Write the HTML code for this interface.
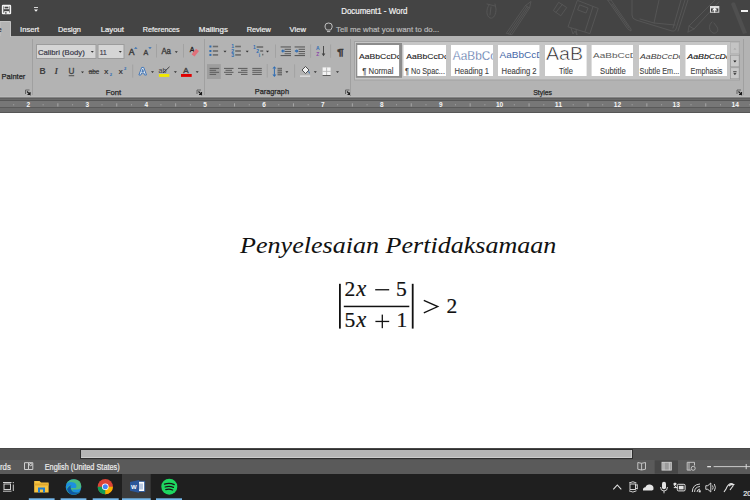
<!DOCTYPE html>
<html><head><meta charset="utf-8">
<style>
*{margin:0;padding:0}
html,body{width:750px;height:500px;overflow:hidden;background:#fff}
svg{display:block}
svg{font-family:"Liberation Sans",sans-serif}
</style></head><body>
<svg width="750" height="500" viewBox="0 0 750 500">

<rect x="0" y="0" width="750" height="36" fill="#444444"/>
<rect x="0" y="36" width="750" height="60" fill="#b3b3b3"/>
<rect x="0" y="96" width="750" height="1" fill="#b9b9b9"/>
<rect x="0" y="97" width="750" height="1" fill="#858585"/>
<rect x="0" y="98" width="750" height="1" fill="#5f5f5f"/>
<rect x="0" y="99" width="750" height="1" fill="#6a6a6a"/>
<rect x="0" y="100" width="750" height="1" fill="#575757"/>
<rect x="0" y="101" width="750" height="6" fill="#777777"/>
<rect x="0" y="107" width="750" height="1" fill="#5a5a5a"/>
<rect x="0" y="108" width="750" height="4" fill="#6c6c6c"/>
<rect x="0" y="112" width="750" height="1" fill="#565656"/>
<rect x="0" y="113" width="750" height="335" fill="#ffffff"/>
<rect x="0" y="448" width="750" height="1" fill="#484848"/>
<rect x="0" y="449" width="750" height="11" fill="#525252"/>
<rect x="80" y="449" width="553" height="10" fill="#2e2e2e"/>
<rect x="81" y="450" width="551" height="8" fill="#cccccc"/>
<rect x="81" y="450" width="550" height="7" fill="#b5b5b5"/>
<rect x="0" y="460" width="750" height="14" fill="#5a5a5a"/>
<rect x="0" y="474" width="750" height="26" fill="#1f1f1f"/>
<g fill="none" stroke="#575757" stroke-width="0.9" stroke-linecap="round" stroke-linejoin="round">
<path d="M489,5 C486,9 486,16 490,18 C494,19 496,14 496,9 L495,4 M491,7 L490,15 M487,4 L495,6"/>
<path d="M506.5,33 L525.5,5.5 L531,1.5 L529.5,8 L512,34.5 Z M508.3,33.6 L527,6.5 M510.2,34 L528.3,7.3 M525.5,5.5 L529.5,8"/>
<path d="M559,2.5 L566.7,7.5 L560.8,15.8 L553.7,10.8 Z M556,12.3 L562.5,4.3"/>
<path d="M577.7,0.5 L598.2,8.4 L589.9,33.6 L568.4,27 Z M593,6.5 L585,31.5 M580,5 L588,8 L586,13 L578,10 Z M571,28 L573,34 L575,31 L577,35 L576,29"/>
<path d="M608,0 L611,0 L631,29 L631,31 L628,29 Z M612,4 L629,28"/>
<path d="M632,0 L632,15 Q632,19 636,20 L672,31 Q675,32 676,29 L685,0 M659,0 L654,23 L675,25 M654,23 L640,19 M681,0 L673,28 M688,0 L678,31"/>
<path d="M688,32 L689,26 L715,0 M688,32 L694,29 L719,2 M689,26 L694,29"/>
<path d="M712,22 C708,25 709,31 713,33 C717,34 719,30 717,27 L714,23"/>
</g>
<path d="M731,4 Q733,1 735,3 L747,33 L743,34 Z" fill="#4f4f4f"/>
<rect x="2.6" y="5.6" width="7.8" height="8" rx="0.4" fill="none" stroke="#f4f4f4" stroke-width="1.5"/>
<rect x="4.2" y="6.2" width="4.6" height="2.6" fill="none" stroke="#f4f4f4" stroke-width="0.8"/>
<rect x="4.2" y="11.2" width="4.8" height="2.6" fill="#f4f4f4"/>
<rect x="5.2" y="12" width="1.3" height="1.8" fill="#555"/>
<rect x="34" y="7" width="4" height="1" fill="#d8d8d8"/>
<path d="M34,9.5 L38,9.5 L36,11.8 Z" fill="#f4f4f4"/>
<text x="341.2" y="13.7" font-size="8.3" fill="#f2f2f2" stroke="#f2f2f2" stroke-width="0.2" textLength="66.3" lengthAdjust="spacingAndGlyphs" >Document1 - Word</text>
<rect x="710" y="6" width="9.3" height="6.7" fill="#dcdcdc"/>
<rect x="711" y="8.4" width="7.3" height="3.3" fill="#3c3c3c"/>
<path d="M711.9,10.4 L714.65,7.6 L717.4,10.4 Z" fill="#f4f4f4"/>
<rect x="714.1" y="10" width="1.1" height="2.7" fill="#f4f4f4"/>
<rect x="741" y="10" width="7" height="2" fill="#f0f0f0"/>
<path d="M0,37 L0,21.5 L10.5,21.5 L10.5,37" fill="#b3b3b3" stroke="#c4c4c4" stroke-width="1"/>
<rect x="0" y="36" width="10" height="2" fill="#b3b3b3"/>
<text x="-2.8" y="32" font-size="8" fill="#2a2a2a" stroke="#2a2a2a" stroke-width="0.2" >e</text>
<text x="20.1" y="32" font-size="8" fill="#f0f0f0" stroke="#f0f0f0" stroke-width="0.2" textLength="19" lengthAdjust="spacingAndGlyphs" >Insert</text>
<text x="58" y="32" font-size="8" fill="#f0f0f0" stroke="#f0f0f0" stroke-width="0.2" textLength="22.9" lengthAdjust="spacingAndGlyphs" >Design</text>
<text x="100.7" y="32" font-size="8" fill="#f0f0f0" stroke="#f0f0f0" stroke-width="0.2" textLength="23.2" lengthAdjust="spacingAndGlyphs" >Layout</text>
<text x="142.8" y="32" font-size="8" fill="#f0f0f0" stroke="#f0f0f0" stroke-width="0.2" textLength="36.8" lengthAdjust="spacingAndGlyphs" >References</text>
<text x="198.8" y="32" font-size="8" fill="#f0f0f0" stroke="#f0f0f0" stroke-width="0.2" textLength="29.1" lengthAdjust="spacingAndGlyphs" >Mailings</text>
<text x="246.7" y="32" font-size="8" fill="#f0f0f0" stroke="#f0f0f0" stroke-width="0.2" textLength="24.2" lengthAdjust="spacingAndGlyphs" >Review</text>
<text x="289.6" y="32" font-size="8" fill="#f0f0f0" stroke="#f0f0f0" stroke-width="0.2" textLength="16.3" lengthAdjust="spacingAndGlyphs" >View</text>
<text x="336" y="32" font-size="8" fill="#b9b9b9" stroke="#b9b9b9" stroke-width="0.2" textLength="103.2" lengthAdjust="spacingAndGlyphs" >Tell me what you want to do...</text>
<g fill="none" stroke="#d0d0d0" stroke-width="0.9"><path d="M326.5,30 Q324.8,27.5 325,26 Q325,23 328.6,23 Q332.2,23 332.2,26 Q332.4,27.5 330.7,30 Z"/><path d="M327,31.6 L330.2,31.6"/></g>
<text x="1.6" y="79.4" font-size="8" fill="#262626" stroke="#262626" stroke-width="0.25" textLength="23.7" lengthAdjust="spacingAndGlyphs" >Painter</text>
<path d="M25.5,94 L25.5,90 L29.5,90" fill="none" stroke="#5a5a5a" stroke-width="0.9"/>
<path d="M27.0,91.5 L30.0,94.5 L30.0,92 M30.0,94.5 L27.5,94.5" fill="none" stroke="#1a1a1a" stroke-width="1.1"/>
<path d="M197,94 L197,90 L201,90" fill="none" stroke="#5a5a5a" stroke-width="0.9"/>
<path d="M198.5,91.5 L201.5,94.5 L201.5,92 M201.5,94.5 L199,94.5" fill="none" stroke="#1a1a1a" stroke-width="1.1"/>
<path d="M345.5,94 L345.5,90 L349.5,90" fill="none" stroke="#5a5a5a" stroke-width="0.9"/>
<path d="M347.0,91.5 L350.0,94.5 L350.0,92 M350.0,94.5 L347.5,94.5" fill="none" stroke="#1a1a1a" stroke-width="1.1"/>
<path d="M737,94 L737,90 L741,90" fill="none" stroke="#5a5a5a" stroke-width="0.9"/>
<path d="M738.5,91.5 L741.5,94.5 L741.5,92 M741.5,94.5 L739,94.5" fill="none" stroke="#1a1a1a" stroke-width="1.1"/>
<rect x="32.0" y="39" width="1" height="56" fill="#a0a0a0"/>
<rect x="204.0" y="39" width="1" height="56" fill="#a0a0a0"/>
<rect x="350.0" y="39" width="1" height="56" fill="#a0a0a0"/>
<rect x="743.0" y="39" width="1" height="56" fill="#a0a0a0"/>
<rect x="156.0" y="44" width="1" height="13.5" fill="#a2a2a2"/>
<rect x="183.0" y="44" width="1" height="13.5" fill="#a2a2a2"/>
<rect x="132.2" y="64.5" width="1" height="13.200000000000003" fill="#a2a2a2"/>
<rect x="275.0" y="44.5" width="1" height="13.299999999999997" fill="#a2a2a2"/>
<rect x="310.1" y="44.5" width="1" height="13.299999999999997" fill="#a2a2a2"/>
<rect x="330.1" y="44.5" width="1" height="13.299999999999997" fill="#a2a2a2"/>
<rect x="266.7" y="64" width="1" height="13.5" fill="#a2a2a2"/>
<rect x="294.1" y="64.4" width="1" height="13.199999999999989" fill="#a2a2a2"/>
<text x="105.7" y="94.7" font-size="8" fill="#262626" stroke="#262626" stroke-width="0.25" textLength="15.4" lengthAdjust="spacingAndGlyphs" >Font</text>
<text x="254.8" y="94.4" font-size="8" fill="#262626" stroke="#262626" stroke-width="0.25" textLength="34.2" lengthAdjust="spacingAndGlyphs" >Paragraph</text>
<text x="533.2" y="94.7" font-size="8" fill="#262626" stroke="#262626" stroke-width="0.25" textLength="18.8" lengthAdjust="spacingAndGlyphs" >Styles</text>
<rect x="36.5" y="44.5" width="59.5" height="14" fill="#d5d5d5" stroke="#9c9c9c" stroke-width="1"/>
<rect x="98" y="44.5" width="26" height="14" fill="#d5d5d5" stroke="#9c9c9c" stroke-width="1"/>
<text x="38" y="55.2" font-size="8" fill="#3a3a4a" stroke="#3a3a4a" stroke-width="0.2" textLength="46.8" lengthAdjust="spacingAndGlyphs" >Calibri (Body)</text>
<text x="99.8" y="55.2" font-size="8" fill="#3a3a4a" stroke="#3a3a4a" stroke-width="0.2" textLength="6.9" lengthAdjust="spacingAndGlyphs" >11</text>
<path d="M90.8,51 L93.8,51 L92.3,52.8 Z" fill="#333"/>
<path d="M118.8,51 L121.8,51 L120.3,52.8 Z" fill="#333"/>
<text x="128.8" y="55.2" font-size="8.6" fill="#404040" stroke="#404040" stroke-width="0.45" >A</text>
<path d="M134,48.8 L135.8,47 L137.6,48.8 Z" fill="#2e6db4"/>
<text x="143.6" y="55.2" font-size="7" fill="#404040" stroke="#404040" stroke-width="0.4" >A</text>
<path d="M148.3,47.3 L151.7,47.3 L150,49 Z" fill="#2e6db4"/>
<text x="161.4" y="54" font-size="8.5" fill="#404040" stroke="#404040" stroke-width="0.4" textLength="9.6" lengthAdjust="spacingAndGlyphs" >Aa</text>
<path d="M174.8,51.2 L177.8,51.2 L176.3,53.0 Z" fill="#333"/>
<text x="189.8" y="51.8" font-size="7" fill="#1e1e1e" stroke="#1e1e1e" stroke-width="0.3" >A</text>
<path d="M191.5,54.5 L196,48.8 L199,51 L194.5,56.5 Z" fill="#e0707a"/>
<path d="M191,54.3 L193.8,56.5" stroke="#b3b3b3" stroke-width="0.6"/>
<text x="39.6" y="74.2" font-size="8.6" font-weight="bold" fill="#404040">B</text>
<text x="54.6" y="74.2" font-size="9" font-style="italic" font-weight="bold" fill="#404040" font-family="Liberation Serif">I</text>
<text x="68.5" y="74" font-size="8.2" fill="#404040" stroke="#404040" stroke-width="0.3">U</text>
<rect x="68.7" y="75.3" width="5.5" height="0.9" fill="#404040"/>
<path d="M81,71.5 L84,71.5 L82.5,73.3 Z" fill="#333"/>
<text x="88.7" y="74.2" font-size="7" fill="#404040" stroke="#404040" stroke-width="0.2" textLength="10.3" lengthAdjust="spacingAndGlyphs">abc</text>
<rect x="88.5" y="71" width="10.7" height="0.8" fill="#404040"/>
<text x="104" y="74.2" font-size="8" font-weight="bold" fill="#404040">x</text>
<text x="109.8" y="76.3" font-size="4.2" font-weight="bold" fill="#2e6db4">2</text>
<text x="118.6" y="74.2" font-size="8" font-weight="bold" fill="#404040">x</text>
<text x="124" y="69.8" font-size="4.2" font-weight="bold" fill="#2e6db4">2</text>
<path d="M138.9,75 L141.7,67.4 L143.7,67.4 L146.5,75 L144.5,75 L143.8,73 L141.6,73 L140.9,75 Z M142.7,69.4 L141.9,71.6 L143.5,71.6 Z" fill="#e2e8ee" fill-rule="evenodd" stroke="#4377b8" stroke-width="1" stroke-linejoin="round"/>
<path d="M151,71.2 L154,71.2 L152.5,73.0 Z" fill="#333"/>
<text x="158.5" y="72.6" font-size="6.5" fill="#404040" textLength="8" lengthAdjust="spacingAndGlyphs">ab</text>
<path d="M163,73 L169.5,66.8" stroke="#404040" stroke-width="1"/>
<rect x="158.9" y="74" width="10.4" height="2.9" fill="#f0e800"/>
<path d="M173.9,71.2 L176.9,71.2 L175.4,73.0 Z" fill="#333"/>
<text x="183.3" y="73.1" font-size="8" fill="#404040" stroke="#404040" stroke-width="0.4" >A</text>
<rect x="181" y="74" width="10.7" height="2.9" fill="#e00000"/>
<path d="M195.7,71.2 L198.7,71.2 L197.2,73.0 Z" fill="#333"/>
<rect x="209.4" y="45.5" width="2" height="2" fill="#2e6db4"/>
<rect x="209.4" y="50" width="2" height="2" fill="#2e6db4"/>
<rect x="209.4" y="53.9" width="2" height="2" fill="#2e6db4"/>
<rect x="212.8" y="45.7" width="5.3" height="1.6" fill="#6c6c6c"/>
<rect x="212.8" y="50.2" width="5.3" height="1.6" fill="#6c6c6c"/>
<rect x="212.8" y="54.1" width="5.3" height="1.6" fill="#6c6c6c"/>
<path d="M223.5,50.8 L226.5,50.8 L225.0,52.599999999999994 Z" fill="#333"/>
<text x="231.2" y="48.4" font-size="5.2" font-weight="bold" fill="#2e6db4">1</text>
<text x="231.2" y="52.9" font-size="5.2" font-weight="bold" fill="#2e6db4">2</text>
<text x="231.2" y="56.8" font-size="5.2" font-weight="bold" fill="#2e6db4">3</text>
<rect x="235.2" y="45.7" width="5.7" height="1.6" fill="#6c6c6c"/>
<rect x="235.2" y="50.2" width="5.7" height="1.6" fill="#6c6c6c"/>
<rect x="235.2" y="54.1" width="5.7" height="1.6" fill="#6c6c6c"/>
<path d="M245.7,50.8 L248.7,50.8 L247.2,52.599999999999994 Z" fill="#333"/>
<text x="252.9" y="48.8" font-size="5" font-weight="bold" fill="#2e6db4">1</text>
<text x="256.2" y="52.8" font-size="5" font-weight="bold" fill="#2e6db4">2</text>
<text x="258.8" y="56.6" font-size="5" font-weight="bold" fill="#2e6db4">i</text>
<rect x="256.6" y="46.2" width="6.6" height="1.6" fill="#6c6c6c"/>
<rect x="260.2" y="50.2" width="3" height="1.6" fill="#6c6c6c"/>
<rect x="262" y="53.800000000000004" width="1.4" height="1.6" fill="#6c6c6c"/>
<path d="M266,50.8 L269,50.8 L267.5,52.599999999999994 Z" fill="#333"/>
<rect x="280.6" y="46.4" width="10.4" height="1.1" fill="#5a5a5a"/>
<rect x="284.6" y="48.8" width="6.4" height="1" fill="#5a5a5a"/>
<rect x="284.6" y="51" width="6.4" height="1" fill="#5a5a5a"/>
<rect x="284.6" y="53.2" width="6.4" height="1" fill="#5a5a5a"/>
<rect x="280.6" y="55" width="10.4" height="1.1" fill="#5a5a5a"/>
<path d="M281.1,51 L283.20000000000005,49 L283.20000000000005,50.3 L284.6,50.3 L284.6,51.7 L283.20000000000005,51.7 L283.20000000000005,53 Z" fill="#2e6db4"/>
<rect x="294.6" y="46.4" width="10.4" height="1.1" fill="#5a5a5a"/>
<rect x="298.6" y="48.8" width="6.4" height="1" fill="#5a5a5a"/>
<rect x="298.6" y="51" width="6.4" height="1" fill="#5a5a5a"/>
<rect x="298.6" y="53.2" width="6.4" height="1" fill="#5a5a5a"/>
<rect x="294.6" y="55" width="10.4" height="1.1" fill="#5a5a5a"/>
<path d="M298.6,51 L296.5,49 L296.5,50.3 L294.90000000000003,50.3 L294.90000000000003,51.7 L296.5,51.7 L296.5,53 Z" fill="#2e6db4"/>
<text x="316" y="50.3" font-size="5" font-weight="bold" fill="#2e6db4">A</text>
<text x="316.2" y="56" font-size="5" font-weight="bold" fill="#8b48a8">Z</text>
<path d="M323.5,46 L323.5,55" stroke="#404040" stroke-width="0.9"/><path d="M321.7,53.5 L325.3,53.5 L323.5,56.2 Z" fill="#404040"/>
<text x="337" y="55" font-size="9.5" fill="#3a3a3a" stroke="#3a3a3a" stroke-width="0.4" textLength="6.8" lengthAdjust="spacingAndGlyphs" >¶</text>
<rect x="207" y="64.1" width="13.8" height="14.9" fill="#9e9e9e"/>
<rect x="209.6" y="67.9" width="9.5" height="1" fill="#5a5a5a"/>
<rect x="209.6" y="69.8" width="6.5" height="1" fill="#5a5a5a"/>
<rect x="209.6" y="71.8" width="9.5" height="1" fill="#5a5a5a"/>
<rect x="209.6" y="73.9" width="6.5" height="1" fill="#5a5a5a"/>
<rect x="224.0" y="67.9" width="9.5" height="1" fill="#5a5a5a"/>
<rect x="225.5" y="69.8" width="6.5" height="1" fill="#5a5a5a"/>
<rect x="224.0" y="71.8" width="9.5" height="1" fill="#5a5a5a"/>
<rect x="225.5" y="73.9" width="6.5" height="1" fill="#5a5a5a"/>
<rect x="238.0" y="67.9" width="9.5" height="1" fill="#5a5a5a"/>
<rect x="241.0" y="69.8" width="6.5" height="1" fill="#5a5a5a"/>
<rect x="238.0" y="71.8" width="9.5" height="1" fill="#5a5a5a"/>
<rect x="241.0" y="73.9" width="6.5" height="1" fill="#5a5a5a"/>
<rect x="252.3" y="67.9" width="9.5" height="1" fill="#5a5a5a"/>
<rect x="252.3" y="69.8" width="9.5" height="1" fill="#5a5a5a"/>
<rect x="252.3" y="71.8" width="9.5" height="1" fill="#5a5a5a"/>
<rect x="252.3" y="73.9" width="9.5" height="1" fill="#5a5a5a"/>
<path d="M274.4,66.2 L276.4,68.6 L272.4,68.6 Z M274.4,77 L276.4,74.6 L272.4,74.6 Z" fill="#2e6db4"/>
<rect x="273.9" y="68.4" width="1" height="6.4" fill="#2e6db4"/>
<rect x="277.5" y="67.8" width="4.5" height="1.6" fill="#6c6c6c"/>
<rect x="277.5" y="69.8" width="4.5" height="1.6" fill="#6c6c6c"/>
<rect x="277.5" y="71.8" width="4.5" height="1.6" fill="#6c6c6c"/>
<rect x="277.5" y="73.8" width="4.5" height="1.6" fill="#6c6c6c"/>
<path d="M285.4,71.2 L288.4,71.2 L286.9,73.0 Z" fill="#333"/>
<path d="M302,70 L305.5,66.5 L309,70 L305.5,73.5 Z" fill="#f2f2f2" stroke="#404040" stroke-width="0.9"/>
<path d="M308.5,70.5 Q310.5,72 309.5,74 Q308.2,72.5 308.5,70.5 Z" fill="#2e6db4"/>
<rect x="300" y="75.6" width="10.2" height="1" fill="#f2f2f2"/>
<path d="M313.8,71.2 L316.8,71.2 L315.3,73.0 Z" fill="#333"/>
<rect x="322.6" y="67.4" width="8" height="8" fill="#f4f4f4"/>
<path d="M326.6,67.4 L326.6,75.4 M322.6,71.4 L330.6,71.4" stroke="#b0b0b0" stroke-width="0.8"/>
<rect x="322.6" y="75.2" width="8" height="0.8" fill="#404040"/>
<path d="M336,71.2 L339,71.2 L337.5,73.0 Z" fill="#333"/>
<rect x="354.5" y="41.5" width="385" height="38.5" fill="#c6c6c6" stroke="#a2a2a2" stroke-width="1"/>
<rect x="355.9" y="43" width="46.1" height="34.8" fill="#8c8c8c"/>
<rect x="357.3" y="45" width="41.80000000000001" height="31" fill="#ffffff"/>
<rect x="403.5" y="45" width="42.5" height="31" fill="#ffffff"/>
<rect x="451" y="45" width="42" height="31" fill="#ffffff"/>
<rect x="498" y="45" width="41.39999999999998" height="31" fill="#ffffff"/>
<rect x="545" y="45" width="41.60000000000002" height="31" fill="#ffffff"/>
<rect x="591.6" y="45" width="41.39999999999998" height="31" fill="#ffffff"/>
<rect x="639" y="45" width="41" height="31" fill="#ffffff"/>
<rect x="685.5" y="45" width="41.5" height="31" fill="#ffffff"/>
<defs>
<clipPath id="tc0"><rect x="357.3" y="45" width="41.80000000000001" height="31"/></clipPath>
<clipPath id="tc1"><rect x="403.5" y="45" width="42.5" height="31"/></clipPath>
<clipPath id="tc2"><rect x="451" y="45" width="42" height="31"/></clipPath>
<clipPath id="tc3"><rect x="498" y="45" width="41.39999999999998" height="31"/></clipPath>
<clipPath id="tc4"><rect x="545" y="45" width="41.60000000000002" height="31"/></clipPath>
<clipPath id="tc5"><rect x="591.6" y="45" width="41.39999999999998" height="31"/></clipPath>
<clipPath id="tc6"><rect x="639" y="45" width="41" height="31"/></clipPath>
<clipPath id="tc7"><rect x="685.5" y="45" width="41.5" height="31"/></clipPath>
</defs>
<text clip-path="url(#tc0)" x="359" y="58.6" font-size="8.1" fill="#1e1e1e" textLength="42" lengthAdjust="spacingAndGlyphs" stroke="#1e1e1e" stroke-width="0.12">AaBbCcDc</text>
<text clip-path="url(#tc1)" x="406.3" y="58.6" font-size="8.1" fill="#1e1e1e" textLength="42" lengthAdjust="spacingAndGlyphs" stroke="#1e1e1e" stroke-width="0.12">AaBbCcDc</text>
<text clip-path="url(#tc2)" x="452.8" y="60.1" font-size="12.3" fill="#2f5496" textLength="43.5" lengthAdjust="spacingAndGlyphs" stroke="#fff" stroke-width="0.35">AaBbCc</text>
<text clip-path="url(#tc3)" x="499.5" y="58.3" font-size="9.4" fill="#4668a8" textLength="44" lengthAdjust="spacingAndGlyphs" >AaBbCcD</text>
<clipPath id="tct"><rect x="545" y="46.8" width="41.6" height="29"/></clipPath>
<text clip-path="url(#tct)" x="546" y="59.6" font-size="18" fill="#1a1a1a" stroke="#ffffff" stroke-width="0.55" textLength="37" lengthAdjust="spacingAndGlyphs">AaB</text>
<text clip-path="url(#tc5)" x="593" y="58.3" font-size="7.9" fill="#5a5a5a" textLength="44" lengthAdjust="spacingAndGlyphs" >AaBbCcD</text>
<text clip-path="url(#tc6)" x="640" y="58.6" font-size="8.1" fill="#3a3a3a" textLength="43" lengthAdjust="spacingAndGlyphs" font-style="italic">AaBbCcDc</text>
<text clip-path="url(#tc7)" x="687.3" y="58.6" font-size="8.1" fill="#111111" textLength="43" lengthAdjust="spacingAndGlyphs" font-style="italic" stroke="#111" stroke-width="0.12">AaBbCcDc</text>
<text clip-path="url(#tc0)" x="362.3" y="74.4" font-size="8.3" fill="#3e3e3e" textLength="31.3" lengthAdjust="spacingAndGlyphs" stroke="#3e3e3e" stroke-width="0.1">¶ Normal</text>
<text clip-path="url(#tc1)" x="405" y="74.4" font-size="8.3" fill="#3e3e3e" textLength="39.9" lengthAdjust="spacingAndGlyphs" stroke="#3e3e3e" stroke-width="0.1">¶ No Spac...</text>
<text clip-path="url(#tc2)" x="454.6" y="74.4" font-size="8.3" fill="#3e3e3e" textLength="34.4" lengthAdjust="spacingAndGlyphs" stroke="#3e3e3e" stroke-width="0.1">Heading 1</text>
<text clip-path="url(#tc3)" x="501.6" y="74.4" font-size="8.3" fill="#3e3e3e" textLength="35" lengthAdjust="spacingAndGlyphs" stroke="#3e3e3e" stroke-width="0.1">Heading 2</text>
<text clip-path="url(#tc4)" x="559" y="74.4" font-size="8.3" fill="#3e3e3e" textLength="14" lengthAdjust="spacingAndGlyphs" stroke="#3e3e3e" stroke-width="0.1">Title</text>
<text clip-path="url(#tc5)" x="600" y="74.4" font-size="8.3" fill="#3e3e3e" textLength="25.7" lengthAdjust="spacingAndGlyphs" stroke="#3e3e3e" stroke-width="0.1">Subtitle</text>
<text clip-path="url(#tc6)" x="639.6" y="74.4" font-size="8.3" fill="#3e3e3e" textLength="39.6" lengthAdjust="spacingAndGlyphs" stroke="#3e3e3e" stroke-width="0.1">Subtle Em...</text>
<text clip-path="url(#tc7)" x="690.6" y="74.4" font-size="8.3" fill="#3e3e3e" textLength="31.9" lengthAdjust="spacingAndGlyphs" stroke="#3e3e3e" stroke-width="0.1">Emphasis</text>
<rect x="730.6" y="42.2" width="8.6" height="11.6" fill="#c4c4c4" stroke="#b0b0b0" stroke-width="0.8"/>
<path d="M733.4,49.6 L736.4,49.6 L734.9,48 Z" fill="#a4a4a4"/>
<rect x="730.6" y="55.2" width="8.6" height="11.6" fill="#c8c8c8" stroke="#9a9a9a" stroke-width="0.8"/>
<path d="M733.3,60.6 L736.5,60.6 L734.9,62.4 Z" fill="#1e1e1e"/>
<rect x="730.6" y="67.7" width="8.6" height="11.1" fill="#c8c8c8" stroke="#9a9a9a" stroke-width="0.8"/>
<rect x="733.2" y="71.4" width="3.4" height="0.8" fill="#1e1e1e"/>
<path d="M733.3,73.2 L736.5,73.2 L734.9,75 Z" fill="#1e1e1e"/>
<text x="26.60" y="106.8" font-size="6.6" font-weight="bold" fill="#f4f4f4" textLength="3.6" lengthAdjust="spacingAndGlyphs">2</text>
<text x="85.50" y="106.8" font-size="6.6" font-weight="bold" fill="#f4f4f4" textLength="3.6" lengthAdjust="spacingAndGlyphs">3</text>
<text x="144.40" y="106.8" font-size="6.6" font-weight="bold" fill="#f4f4f4" textLength="3.6" lengthAdjust="spacingAndGlyphs">4</text>
<text x="203.30" y="106.8" font-size="6.6" font-weight="bold" fill="#f4f4f4" textLength="3.6" lengthAdjust="spacingAndGlyphs">5</text>
<text x="262.20" y="106.8" font-size="6.6" font-weight="bold" fill="#f4f4f4" textLength="3.6" lengthAdjust="spacingAndGlyphs">6</text>
<text x="321.10" y="106.8" font-size="6.6" font-weight="bold" fill="#f4f4f4" textLength="3.6" lengthAdjust="spacingAndGlyphs">7</text>
<text x="380.00" y="106.8" font-size="6.6" font-weight="bold" fill="#f4f4f4" textLength="3.6" lengthAdjust="spacingAndGlyphs">8</text>
<text x="438.90" y="106.8" font-size="6.6" font-weight="bold" fill="#f4f4f4" textLength="3.6" lengthAdjust="spacingAndGlyphs">9</text>
<text x="495.90" y="106.8" font-size="6.6" font-weight="bold" fill="#f4f4f4" textLength="7.4" lengthAdjust="spacingAndGlyphs">10</text>
<text x="554.80" y="106.8" font-size="6.6" font-weight="bold" fill="#f4f4f4" textLength="7.4" lengthAdjust="spacingAndGlyphs">11</text>
<text x="613.70" y="106.8" font-size="6.6" font-weight="bold" fill="#f4f4f4" textLength="7.4" lengthAdjust="spacingAndGlyphs">12</text>
<text x="672.60" y="106.8" font-size="6.6" font-weight="bold" fill="#f4f4f4" textLength="7.4" lengthAdjust="spacingAndGlyphs">13</text>
<text x="731.50" y="106.8" font-size="6.6" font-weight="bold" fill="#f4f4f4" textLength="7.4" lengthAdjust="spacingAndGlyphs">14</text>
<rect x="-16.27" y="104.3" width="1" height="1" fill="#a8a8a8"/>
<rect x="13.17" y="104.3" width="1" height="1" fill="#a8a8a8"/>
<rect x="-1.55" y="103.3" width="1" height="3.2" fill="#a8a8a8"/>
<rect x="42.62" y="104.3" width="1" height="1" fill="#a8a8a8"/>
<rect x="72.07" y="104.3" width="1" height="1" fill="#a8a8a8"/>
<rect x="57.35" y="103.3" width="1" height="3.2" fill="#a8a8a8"/>
<rect x="101.52" y="104.3" width="1" height="1" fill="#a8a8a8"/>
<rect x="130.97" y="104.3" width="1" height="1" fill="#a8a8a8"/>
<rect x="116.25" y="103.3" width="1" height="3.2" fill="#a8a8a8"/>
<rect x="160.42" y="104.3" width="1" height="1" fill="#a8a8a8"/>
<rect x="189.88" y="104.3" width="1" height="1" fill="#a8a8a8"/>
<rect x="175.15" y="103.3" width="1" height="3.2" fill="#a8a8a8"/>
<rect x="219.32" y="104.3" width="1" height="1" fill="#a8a8a8"/>
<rect x="248.77" y="104.3" width="1" height="1" fill="#a8a8a8"/>
<rect x="234.05" y="103.3" width="1" height="3.2" fill="#a8a8a8"/>
<rect x="278.23" y="104.3" width="1" height="1" fill="#a8a8a8"/>
<rect x="307.68" y="104.3" width="1" height="1" fill="#a8a8a8"/>
<rect x="292.95" y="103.3" width="1" height="3.2" fill="#a8a8a8"/>
<rect x="337.12" y="104.3" width="1" height="1" fill="#a8a8a8"/>
<rect x="366.57" y="104.3" width="1" height="1" fill="#a8a8a8"/>
<rect x="351.85" y="103.3" width="1" height="3.2" fill="#a8a8a8"/>
<rect x="396.02" y="104.3" width="1" height="1" fill="#a8a8a8"/>
<rect x="425.47" y="104.3" width="1" height="1" fill="#a8a8a8"/>
<rect x="410.75" y="103.3" width="1" height="3.2" fill="#a8a8a8"/>
<rect x="454.93" y="104.3" width="1" height="1" fill="#a8a8a8"/>
<rect x="484.38" y="104.3" width="1" height="1" fill="#a8a8a8"/>
<rect x="469.65" y="103.3" width="1" height="3.2" fill="#a8a8a8"/>
<rect x="513.82" y="104.3" width="1" height="1" fill="#a8a8a8"/>
<rect x="543.27" y="104.3" width="1" height="1" fill="#a8a8a8"/>
<rect x="528.55" y="103.3" width="1" height="3.2" fill="#a8a8a8"/>
<rect x="572.73" y="104.3" width="1" height="1" fill="#a8a8a8"/>
<rect x="602.17" y="104.3" width="1" height="1" fill="#a8a8a8"/>
<rect x="587.45" y="103.3" width="1" height="3.2" fill="#a8a8a8"/>
<rect x="631.62" y="104.3" width="1" height="1" fill="#a8a8a8"/>
<rect x="661.07" y="104.3" width="1" height="1" fill="#a8a8a8"/>
<rect x="646.35" y="103.3" width="1" height="3.2" fill="#a8a8a8"/>
<rect x="690.52" y="104.3" width="1" height="1" fill="#a8a8a8"/>
<rect x="719.97" y="104.3" width="1" height="1" fill="#a8a8a8"/>
<rect x="705.25" y="103.3" width="1" height="3.2" fill="#a8a8a8"/>
<rect x="749.42" y="104.3" width="1" height="1" fill="#a8a8a8"/>
<rect x="778.87" y="104.3" width="1" height="1" fill="#a8a8a8"/>
<rect x="764.15" y="103.3" width="1" height="3.2" fill="#a8a8a8"/>
<text x="240.1" y="252.8" font-family="Liberation Serif" font-style="italic" font-size="24" fill="#111111" stroke="#111111" stroke-width="0.05" textLength="316.3" lengthAdjust="spacingAndGlyphs">Penyelesaian Pertidaksamaan</text>
<rect x="339" y="283.8" width="1.8" height="44.8" fill="#111"/>
<rect x="411.8" y="283.8" width="1.8" height="44.8" fill="#111"/>
<rect x="343.8" y="305.7" width="65.5" height="1.5" fill="#111"/>
<text x="344.6" y="295.6" font-size="21.5" font-family="Liberation Serif" fill="#111111" stroke="#111111" stroke-width="0.2">2</text>
<text x="356.3" y="295.6" font-size="22.5" font-style="italic" font-family="Liberation Serif" fill="#111111" stroke="#111111" stroke-width="0.2">x</text>
<rect x="375.2" y="289.1" width="14" height="1.3" fill="#111"/>
<text x="396.1" y="295.6" font-size="21.5" font-family="Liberation Serif" fill="#111111" stroke="#111111" stroke-width="0.2">5</text>
<text x="344.6" y="327.2" font-size="21.5" font-family="Liberation Serif" fill="#111111" stroke="#111111" stroke-width="0.2">5</text>
<text x="356.3" y="327.2" font-size="22.5" font-style="italic" font-family="Liberation Serif" fill="#111111" stroke="#111111" stroke-width="0.2">x</text>
<rect x="375.4" y="320.8" width="13.8" height="1.3" fill="#111"/>
<rect x="381.65" y="314.6" width="1.3" height="13.6" fill="#111"/>
<text x="396.4" y="327.2" font-size="21.5" font-family="Liberation Serif" fill="#111111" stroke="#111111" stroke-width="0.2">1</text>
<path d="M423.8,300.3 L437.8,306.6 L423.8,312.9" fill="none" stroke="#111" stroke-width="1.3"/>
<text x="446.6" y="312.8" font-size="21.5" font-family="Liberation Serif" fill="#111111" stroke="#111111" stroke-width="0.2">2</text>
<text x="0" y="470" font-size="8.3" fill="#e8e8e8" stroke="#e8e8e8" stroke-width="0.2" textLength="10.8" lengthAdjust="spacingAndGlyphs" >rds</text>
<g fill="none" stroke="#dcdcdc" stroke-width="0.9"><path d="M24.5,462.7 L28.5,462.7 L28.5,469.5 L24.5,469.5 Z M28.5,462.7 L32.8,462.7 L32.8,469.5 L28.5,469.5"/><circle cx="30.7" cy="464.6" r="1.2"/></g>
<text x="44.7" y="470" font-size="8.3" fill="#ececec" stroke="#ececec" stroke-width="0.2" textLength="75" lengthAdjust="spacingAndGlyphs" >English (United States)</text>
<rect x="654.7" y="460.3" width="23.3" height="13.4" fill="#474747"/>
<g fill="none" stroke="#cfcfcf" stroke-width="0.9">
<path d="M637.8,462.5 L641.6,463.3 L641.6,470 L637.8,469.2 Z M641.6,463.3 L645.5,462.5 L645.5,469.2 L641.6,470"/>
<rect x="662" y="462.3" width="9.3" height="7.8" fill="#9a9a9a"/><path d="M664,462.3 L664,470.1 M669.3,462.3 L669.3,470.1"/>
<path d="M687.2,462.3 L694.5,462.3 L694.5,465.5 M687.2,462.3 L687.2,470.1 L691,470.1 M689,462.3 L689,470"/>
<circle cx="693.2" cy="468.3" r="2"/>
</g>
<rect x="707.2" y="466" width="3.8" height="1.3" fill="#e0e0e0"/>
<rect x="713.6" y="466.2" width="40" height="0.9" fill="#d8d8d8"/>
<rect x="745.7" y="464" width="1" height="5.2" fill="#d8d8d8"/>
<g fill="none" stroke="#cfcfcf" stroke-width="1"><rect x="4" y="484" width="6.5" height="5.5"/><path d="M3,482.5 L11.5,482.5 M3,491.2 L11.5,491.2"/><path d="M13.3,484.5 L13.3,491"/></g>
<circle cx="13.3" cy="482.6" r="0.7" fill="#cfcfcf"/>
<path d="M34.2,481 L39.5,481 L41,482.4 L48.6,482.4 L48.6,492.4 L34.2,492.4 Z" fill="#f5c342"/>
<rect x="34.2" y="483.5" width="14.4" height="2" fill="#e0a82e"/>
<path d="M38,487.5 L45,487.5 L45,492.4 L43,492.4 L43,489.5 L40,489.5 L40,492.4 L38,492.4 Z" fill="#1f7ed1"/>
<circle cx="73.5" cy="487" r="7.8" fill="#1b8fe0"/>
<path d="M66,484 Q69,479 75,479.3 Q81,480 81.3,486 Q81,489.5 77,489.5 L72,489.5 Q73,492.5 77,492.5 Q79,492.5 80.5,491.5 Q77.5,495 73,494.8 Q67,494 66.8,488.5 Q67.5,485.5 71.5,485 Q70,486.5 70.8,488 L76,488 Q77.5,484 74,482.5 Q69,481 66,484 Z" fill="#53c26f" opacity="0.85"/>
<path d="M70.8,488 Q71.5,492.5 77,492.5 Q79,492.5 80.5,491.5 Q77.5,495 73,494.8 Q68,494.2 67,489 Q68.5,486 71.5,485 Q70,486.5 70.8,488 Z" fill="#0c5aa8"/>
<circle cx="105.3" cy="486.7" r="7.6" fill="#db4437"/>
<path d="M105.3,486.7 L98.7,490.5 A7.6,7.6 0 0 0 105.8,494.3 Z" fill="#0f9d58"/>
<path d="M105.3,486.7 L112.9,486.7 A7.6,7.6 0 0 1 105.3,494.3 Z" fill="#f4b400"/>
<path d="M105.3,486.7 L97.7,486.7 A7.6,7.6 0 0 0 101.5,493.3 Z" fill="#0f9d58"/>
<circle cx="105.3" cy="486.7" r="3.3" fill="#ffffff"/>
<circle cx="105.3" cy="486.7" r="2.5" fill="#4285f4"/>
<rect x="122" y="474" width="28.7" height="26" fill="#3c3c3c"/>
<rect x="137" y="481.3" width="7.7" height="10.2" fill="#ffffff" stroke="#2b579a" stroke-width="0.9"/>
<rect x="139" y="483.5" width="4" height="6" fill="#b8c8e0"/>
<path d="M130,482 L139,480 L139,492.7 L130,490.7 Z" fill="#2b579a"/>
<text x="131" y="489.3" font-size="6" font-weight="bold" fill="#ffffff">W</text>
<circle cx="169.3" cy="486.7" r="8" fill="#1ed760"/>
<g fill="none" stroke="#191414" stroke-width="1.3" stroke-linecap="round"><path d="M164.5,484.2 Q169.5,482.3 174.2,484.6"/><path d="M165.2,487 Q169.5,485.5 173.4,487.4"/><path d="M165.8,489.6 Q169.3,488.5 172.6,490"/></g>
<rect x="28.8" y="498.3" width="25.8" height="1.7" fill="#76b9ed"/>
<rect x="60.6" y="498.3" width="25.800000000000004" height="1.7" fill="#76b9ed"/>
<rect x="92.7" y="498.3" width="26.0" height="1.7" fill="#76b9ed"/>
<rect x="122" y="498.3" width="28.69999999999999" height="1.7" fill="#76b9ed"/>
<rect x="156" y="498.3" width="26" height="1.7" fill="#76b9ed"/>
<path d="M613.3,489.3 L617.3,485 L621.3,489.3" fill="none" stroke="#e4e4e4" stroke-width="1.1"/>
<g fill="none" stroke="#e4e4e4" stroke-width="0.9"><rect x="630" y="484" width="5.5" height="5.5"/><path d="M635.5,485.5 L637.3,484.5 L637.3,489 L635.5,488 M629,483 Q633,480.5 636.5,483 M629,490.8 Q633,493.3 636.5,490.8"/></g>
<path d="M643,490.4 Q642.5,487.5 645.5,487.3 Q646.5,484 650,484.5 Q653.5,485 653.5,488 Q654,490.4 652,490.4 Z" fill="#e4e4e4"/>
<rect x="662" y="481.7" width="4" height="7.5" rx="2" fill="#e4e4e4"/><path d="M660.5,487 Q660.5,491 664,491 Q667.5,491 667.5,487 M664,491 L664,493.3" fill="none" stroke="#e4e4e4" stroke-width="0.9"/>
<rect x="677.3" y="484.3" width="7.8" height="6.6" rx="1.2" fill="none" stroke="#e4e4e4" stroke-width="1"/><rect x="678.8" y="485.8" width="4.8" height="3.6" fill="#e4e4e4"/><path d="M673.8,485 L676.6,487.6 M673.8,487.6 L677.3,487.6" stroke="#e4e4e4" stroke-width="1"/><rect x="673.7" y="482.7" width="2.6" height="2.6" rx="0.6" fill="#e4e4e4"/>
<g fill="none" stroke="#e4e4e4" stroke-width="0.9"><path d="M692.3,492 Q692.3,484.5 700,484"/><path d="M694.6,492 Q694.6,487 700,486.5"/><path d="M697,492 Q697,489.5 700,489"/></g><rect x="698.7" y="490.3" width="2" height="2" fill="#e4e4e4"/>
<g fill="none" stroke="#e4e4e4" stroke-width="0.9"><path d="M705.8,485.7 L707.8,485.7 L710.8,483 L710.8,492 L707.8,489.3 L705.8,489.3 Z"/><path d="M712.5,485.5 Q713.8,487.5 712.5,489.5 M714.3,484 Q716.5,487.5 714.3,491"/></g>
<g fill="none" stroke="#e4e4e4" stroke-width="1.1"><path d="M724,492 L726,489 Q728,484 731,483.5 Q734,483.5 733,486 Q731,488.5 730,490 M729,486 Q731,484 734.5,484.5"/></g>
<text x="743.3" y="496.2" font-size="8" fill="#f0f0f0" stroke="#f0f0f0" stroke-width="0.2" textLength="8" lengthAdjust="spacingAndGlyphs" >20</text>
</svg></body></html>
